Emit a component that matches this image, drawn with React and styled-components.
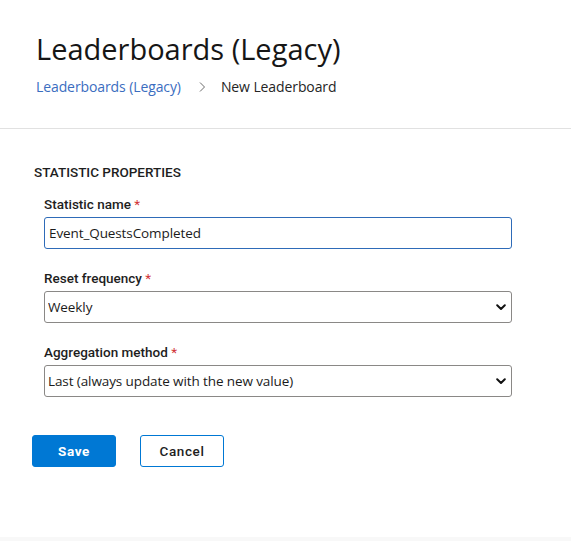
import React, { useState } from 'react'
import styled, { createGlobalStyle } from 'styled-components'

const GlobalStyle = createGlobalStyle`
  html, body {
    margin: 0;
    padding: 0;
    background: #ffffff;
  }
  body {
    font-family: "Open Sans", "Noto Sans", sans-serif;
    color: #1b1b1b;
  }
`

function App() {
  const [name, setName] = useState('Event_QuestsCompleted')
  const [freq, setFreq] = useState('Weekly')
  const [method, setMethod] = useState('Last')

  return (
    <>
      <GlobalStyle />
      <Page>
        <Header>
          <Title>Leaderboards (Legacy)</Title>
          <Crumbs>
            <CrumbLink href="#">Leaderboards (Legacy)</CrumbLink>
            <Chevron viewBox="0 0 8 12" aria-hidden="true">
              <path d="M2 1.5 L6.5 6 L2 10.5" fill="none" stroke="#6b6b6b" strokeWidth="1" />
            </Chevron>
            <Crumb>New Leaderboard</Crumb>
          </Crumbs>
        </Header>

        <Form>
          <SectionTitle>STATISTIC PROPERTIES</SectionTitle>
          <Fields>
            <Field>
              <Label>Statistic name <Req>*</Req></Label>
              <TextInput value={name} onChange={(e) => setName(e.target.value)} />
            </Field>
            <Field>
              <Label>Reset frequency <Req>*</Req></Label>
              <SelectWrap>
                <Select value={freq} onChange={(e) => setFreq(e.target.value)}>
                  <option>Never</option>
                  <option>Hourly</option>
                  <option>Daily</option>
                  <option>Weekly</option>
                  <option>Monthly</option>
                </Select>
                <SelectArrow />
              </SelectWrap>
            </Field>
            <Field>
              <Label>Aggregation method <Req>*</Req></Label>
              <SelectWrap>
                <Select value={method} onChange={(e) => setMethod(e.target.value)}>
                  <option value="Last">Last (always update with the new value)</option>
                  <option value="Min">Minimum (always take the lowest value)</option>
                  <option value="Max">Maximum (always take the highest value)</option>
                  <option value="Sum">Sum (add this value to the existing value)</option>
                </Select>
                <SelectArrow />
              </SelectWrap>
            </Field>
          </Fields>

          <Actions>
            <Button primary>Save</Button>
            <Button>Cancel</Button>
          </Actions>
        </Form>
        <Footer />
      </Page>
    </>
  )
}

function SelectArrow() {
  return (
    <Arrow viewBox="0 0 10 7" aria-hidden="true">
      <path d="M1.2 1.3 L5 5 L8.8 1.3" fill="none" stroke="#111" strokeWidth="2" strokeLinecap="round" strokeLinejoin="round" />
    </Arrow>
  )
}

export default App

const Page = styled.div`
  width: 571px;
  height: 541px;
  display: flex;
  flex-direction: column;
  overflow: hidden;
`
const Header = styled.div`
  padding: 30px 36px 0;
  height: 98px;
  border-bottom: 1px solid #e1e1e1;
`
const Title = styled.h1`
  margin: 0;
  font-size: 29px;
  font-weight: 400;
  line-height: 38px;
  color: #161616;
`
const Crumbs = styled.div`
  display: flex;
  align-items: center;
  margin-top: 9px;
  font-size: 14px;
  line-height: 20px;
`
const CrumbLink = styled.a`
  color: #3b6dbf;
  text-decoration: none;
  letter-spacing: -0.1px;
`
const Chevron = styled.svg`
  width: 8px;
  height: 12px;
  margin: 0 15px 0 17px;
`
const Crumb = styled.span`
  color: #252525;
  letter-spacing: -0.1px;
`
const Form = styled.div`
  flex: 1;
  padding: 35px 0 0 32px;
`
const SectionTitle = styled.div`
  margin-left: 2px;
  font-family: Roboto, "Noto Sans", sans-serif;
  font-weight: 500;
  font-size: 13.5px;
  line-height: 16px;
  color: #1e1e1e;
`
const Fields = styled.div`
  display: flex;
  flex-direction: column;
  gap: 21px;
  padding-left: 12px;
  margin-top: 16px;
  width: 468px;
`
const Field = styled.div`
  display: flex;
  flex-direction: column;
  gap: 5px;
`
const Label = styled.label`
  font-family: Roboto, "Noto Sans", sans-serif;
  font-weight: 500;
  font-size: 13.5px;
  line-height: 16px;
  color: #1e1e1e;
`
const Req = styled.span`
  color: #d13438;
  font-weight: 400;
`
const TextInput = styled.input`
  box-sizing: border-box;
  width: 100%;
  height: 32px;
  padding: 0 4px;
  border: 1px solid #2e6bb8;
  border-radius: 3px;
  font-family: "Open Sans", "Noto Sans", sans-serif;
  font-size: 13.5px;
  color: #1b1b1b;
  outline: none;
  letter-spacing: -0.1px;
`
const SelectWrap = styled.div`
  position: relative;
`
const Select = styled.select`
  box-sizing: border-box;
  width: 100%;
  height: 32px;
  padding: 0 3px;
  border: 1px solid #8a8886;
  border-radius: 3px;
  background: #ffffff;
  appearance: none;
  font-family: "Open Sans", "Noto Sans", sans-serif;
  font-size: 13.5px;
  color: #1b1b1b;
  outline: none;
  letter-spacing: -0.1px;
`
const Arrow = styled.svg`
  position: absolute;
  right: 6px;
  top: 13px;
  width: 10px;
  height: 7px;
  pointer-events: none;
`
const Actions = styled.div`
  display: flex;
  gap: 24px;
  margin-top: 38px;
`
const Button = styled.button`
  box-sizing: border-box;
  width: 84px;
  height: 32px;
  border-radius: 3px;
  border: 1px solid #0078d4;
  background: ${(p) => (p.primary ? '#0078d4' : '#ffffff')};
  color: ${(p) => (p.primary ? '#ffffff' : '#1e1e1e')};
  font-family: Roboto, "Noto Sans", sans-serif;
  font-weight: ${(p) => (p.primary ? 700 : 500)};
  font-size: 13.5px;
  letter-spacing: 0.6px;
  cursor: pointer;
`
const Footer = styled.div`
  height: 4px;
  background: #f8f8f8;
`
